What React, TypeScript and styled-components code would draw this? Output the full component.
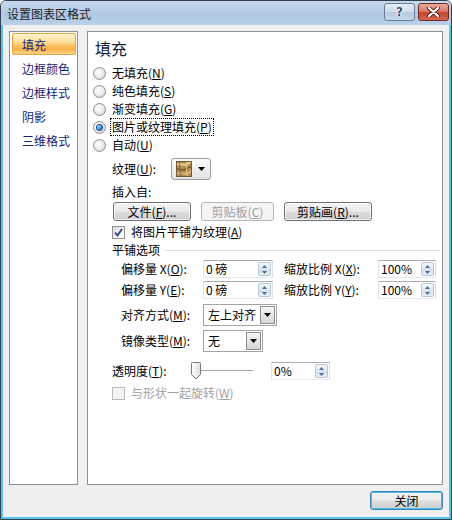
import React from 'react';
import styled, { createGlobalStyle, css } from 'styled-components';

const FONT = `"Noto Sans CJK SC", "Noto Sans", "Liberation Sans", sans-serif`;

const GlobalStyle = createGlobalStyle`
  html, body { margin: 0; padding: 0; background: #ffffff; }
  body { font-family: ${FONT}; font-size: 12px; color: #000; }
  * { box-sizing: border-box; }
`;

const Window = styled.div`
  width: 452px;
  height: 520px;
  border: 1px solid #34404e;
  border-radius: 6px 6px 0 0;
  display: flex;
  flex-direction: column;
  overflow: hidden;
  background: #b9d0e8;
`;

const TitleBar = styled.div`
  height: 24px;
  flex: none;
  display: flex;
  align-items: center;
  padding: 0 2px 0 6px;
  background: linear-gradient(#c6daee 0%, #b0c8e2 55%, #b9d0ea 100%);
`;

const Title = styled.div`
  flex: 1;
  font-size: 12px;
  line-height: 16px;
  color: #1c1c1c;
  padding-top: 2px;
`;

const CaptionButton = styled.div<{ $variant: 'help' | 'close' }>`
  width: 31px;
  height: 18px;
  margin-top: -3px;
  border-radius: 3px;
  display: flex;
  align-items: center;
  justify-content: center;
  ${(p) =>
    p.$variant === 'help'
      ? css`
          border: 1px solid #6b7e96;
          background: linear-gradient(#e6eef7 0%, #cddbeb 50%, #b6c9de 51%, #c8d8ea 100%);
          margin-right: 3px;
        `
      : css`
          border: 1px solid #6e2a22;
          background: linear-gradient(#e9a999 0%, #d87b6a 45%, #c2412c 55%, #d66a55 100%);
        `}
`;

const HelpGlyph = styled.span`
  font-family: "DejaVu Sans", sans-serif;
  font-weight: bold;
  font-size: 12px;
  line-height: 12px;
  color: #3d4d66;
  text-shadow: 0 0 1px #fff, 1px 0 0 #fff, -1px 0 0 #fff;
`;

const Body = styled.div`
  flex: 1;
  background: #f0f0f0;
  border: 2px solid #59c3ea;
  border-top: none;
  display: flex;
  flex-direction: column;
  padding: 6px 6px 0 6px;
`;

const Panels = styled.div`
  display: flex;
  gap: 9px;
  height: 454px;
  flex: none;
`;

const NavPanel = styled.div`
  width: 69px;
  border: 1px solid #8e8e99;
  background: #ffffff;
  padding: 0 1px 0 2px;
`;

const NavItem = styled.div<{ $active?: boolean }>`
  height: 22px;
  margin: 1px 0 2px;
  padding-left: 9px;
  display: flex;
  align-items: center;
  font-size: 12px;
  color: #14237a;
  border: 1px solid transparent;
  border-radius: 2px;
  ${(p) =>
    p.$active &&
    css`
      border-color: #e2a64a;
      background: linear-gradient(#fff3cf 0%, #fde2a2 35%, #fbc062 60%, #f9b349 75%, #fdd387 100%);
    `}
`;

const ContentPanel = styled.div`
  width: 356px;
  border: 1px solid #8e8e99;
  background: #ffffff;
  padding: 6px 0 0 5px;
  display: flex;
  flex-direction: column;
`;

const Heading = styled.div`
  font-size: 16px;
  line-height: 20px;
  height: 20px;
  margin-left: 2px;
  color: #14213d;
`;

const RadioGroup = styled.div`
  margin-top: 6px;
  display: flex;
  flex-direction: column;
`;

const RadioRow = styled.div`
  height: 18px;
  display: flex;
  align-items: center;
  gap: 6px;
`;

const RadioCircle = styled.span<{ $checked?: boolean }>`
  width: 13px;
  height: 13px;
  border-radius: 50%;
  border: 1px solid #8d8f91;
  background: radial-gradient(circle at 40% 40%, #ffffff 0%, #eeeeee 45%, #cfd0d1 100%);
  display: flex;
  align-items: center;
  justify-content: center;
  flex: none;
  &::after {
    content: '';
    display: ${(p) => (p.$checked ? 'block' : 'none')};
    width: 5px;
    height: 5px;
    border-radius: 50%;
    background: radial-gradient(circle at 35% 35%, #8fdcff 0%, #2a86d0 55%, #0d3f7e 100%);
    box-shadow: 0 0 0 1px #1b4f8f;
  }
`;

const Text = styled.span<{ $focus?: boolean; $disabled?: boolean }>`
  font-size: 12px;
  line-height: 16px;
  white-space: nowrap;
  color: ${(p) => (p.$disabled ? '#a2a2a2' : '#000')};
  ${(p) =>
    p.$focus &&
    css`
      outline: 1px dotted #000;
      outline-offset: 0;
      padding: 0 1px;
      margin-left: -1px;
    `}
`;

const Key = styled.span`
  text-decoration: underline;
`;

const Indent = styled.div`
  margin-left: 19px;
  display: flex;
  flex-direction: column;
`;

const Row = styled.div<{ $h: number; $mt: number; $ml?: number }>`
  display: flex;
  align-items: center;
  height: ${(p) => p.$h}px;
  margin-top: ${(p) => p.$mt}px;
  margin-left: ${(p) => p.$ml ?? 0}px;
`;

const Label = styled.span<{ $w: number }>`
  width: ${(p) => p.$w}px;
  flex: none;
  font-size: 12px;
  line-height: 16px;
  white-space: nowrap;
`;

const TextureDrop = styled.div`
  width: 40px;
  height: 22px;
  border: 1px solid #9aa0a6;
  border-radius: 3px;
  background: linear-gradient(#fbfbfb 0%, #efefef 50%, #e2e2e2 100%);
  display: flex;
  align-items: center;
  padding-left: 4px;
  gap: 6px;
`;

const Button = styled.div<{ $w: number; $disabled?: boolean }>`
  width: ${(p) => p.$w}px;
  height: 19px;
  flex: none;
  border: 1px solid ${(p) => (p.$disabled ? '#b4b8bb' : '#707070')};
  border-radius: 3px;
  background: ${(p) =>
    p.$disabled
      ? '#f4f4f4'
      : 'linear-gradient(#f4f4f4 0%, #ebebeb 48%, #dddddd 52%, #cfcfcf 100%)'};
  color: ${(p) => (p.$disabled ? '#a0a0a0' : '#000')};
  font-size: 12px;
  line-height: 17px;
  text-align: center;
  white-space: nowrap;
  box-shadow: ${(p) => (p.$disabled ? 'none' : 'inset 0 0 0 1px rgba(255,255,255,0.7)')};
`;

const ButtonRow = styled.div`
  display: flex;
  gap: 10px;
  margin-top: 2px;
  margin-left: 1px;
  height: 19px;
`;

const CheckBox = styled.span<{ $disabled?: boolean }>`
  width: 13px;
  height: 13px;
  flex: none;
  border: 1px solid ${(p) => (p.$disabled ? '#bcbcbc' : '#8e8f8f')};
  background: ${(p) =>
    p.$disabled ? '#f4f4f4' : 'linear-gradient(135deg, #dcdcdc 0%, #f4f4f4 60%, #ffffff 100%)'};
  display: flex;
  align-items: center;
  justify-content: center;
  margin-right: 6px;
`;

const Rule = styled.div`
  flex: 1;
  height: 1px;
  background: #d5dfe5;
  margin: 1px 2px 0 5px;
`;

const SpinBox = styled.div<{ $w: number }>`
  width: ${(p) => p.$w}px;
  height: 18px;
  flex: none;
  border: 1px solid #abadb3;
  border-left-color: #e2e3ea;
  border-right-color: #dbdfe6;
  border-bottom-color: #e3e9ef;
  background: #fff;
  display: flex;
  align-items: center;
  padding-left: 2px;
`;

const SpinValue = styled.span`
  flex: 1;
  font-size: 12px;
  line-height: 16px;
  white-space: pre;
`;

const Spinner = styled.div`
  width: 13px;
  height: 14px;
  margin-right: 1px;
  display: flex;
  flex-direction: column;
  border: 1px solid #b9c6d6;
  border-radius: 2px;
  background: linear-gradient(#f3f7fc 0%, #e2eaf4 50%, #d2deec 51%, #e6eef7 100%);
`;

const SpinHalf = styled.div`
  flex: 1;
  display: flex;
  align-items: center;
  justify-content: center;
`;

const Select = styled.div<{ $w: number }>`
  width: ${(p) => p.$w}px;
  height: 22px;
  flex: none;
  border: 1px solid #a3a3a3;
  background: #fff;
  display: flex;
  align-items: center;
  padding-left: 4px;
`;

const SelectText = styled.span`
  flex: 1;
  font-size: 12px;
  line-height: 16px;
  white-space: nowrap;
`;

const SelectArrow = styled.div`
  width: 15px;
  height: 18px;
  margin-right: 1px;
  border: 1px solid #8d8d8d;
  background: linear-gradient(#f6f6f6 0%, #e6e6e6 50%, #d6d6d6 100%);
  display: flex;
  align-items: center;
  justify-content: center;
`;

const SliderGap = styled.div`
  width: 18px;
  flex: none;
`;

const Footer = styled.div`
  display: flex;
  justify-content: flex-end;
  margin-top: 6px;
`;

const DefaultButton = styled.div`
  width: 73px;
  height: 19px;
  border: 1px solid #3c7fb1;
  border-radius: 3px;
  background: linear-gradient(#eaf6fd 0%, #d9f0fc 48%, #bee6fd 52%, #a7d9f5 100%);
  box-shadow: inset 0 0 0 1px #8ed3f7;
  font-size: 12px;
  line-height: 17px;
  text-align: center;
  background: linear-gradient(#f4f4f4 0%, #ebebeb 48%, #dddddd 52%, #cfcfcf 100%);
  box-shadow: inset 0 0 0 1px #48c3f0;
`;

const Arrow = () => (
  <svg width="7" height="4" viewBox="0 0 7 4">
    <path d="M0 0 H7 L3.5 4 Z" fill="#000" />
  </svg>
);

const SpinArrow = ({ up }: { up?: boolean }) => (
  <svg width="5" height="3" viewBox="0 0 5 3">
    <path d={up ? 'M0 3 H5 L2.5 0 Z' : 'M0 0 H5 L2.5 3 Z'} fill="#4d6b98" />
  </svg>
);

const Spin = ({ w, value }: { w: number; value: string }) => (
  <SpinBox $w={w}>
    <SpinValue>{value}</SpinValue>
    <Spinner>
      <SpinHalf>
        <SpinArrow up />
      </SpinHalf>
      <SpinHalf>
        <SpinArrow />
      </SpinHalf>
    </Spinner>
  </SpinBox>
);

const TextureIcon = () => (
  <svg width="16" height="16" viewBox="0 0 16 16">
    <rect x="0" y="0" width="16" height="16" fill="#b48d55" />
    <path d="M0 4 C4 1 7 6 11 3 S16 2 16 2" stroke="#e6cf95" strokeWidth="2" fill="none" />
    <path d="M0 9 C3 6 6 11 10 8 S15 6 16 7" stroke="#7a5528" strokeWidth="1.5" fill="none" />
    <path d="M0 13 C4 10 8 15 12 12 S16 11 16 11" stroke="#d9bd80" strokeWidth="1.6" fill="none" />
    <path d="M3 0 C5 5 2 9 6 16" stroke="#8f6532" strokeWidth="1" fill="none" />
    <path d="M10 0 C12 5 9 10 12 16" stroke="#e2c98c" strokeWidth="1" fill="none" />
    <rect x="0.5" y="0.5" width="15" height="15" fill="none" stroke="#6f5a3a" />
  </svg>
);

const CheckMark = () => (
  <svg width="9" height="9" viewBox="0 0 9 9">
    <path d="M1 4.5 L3.5 7.5 L8 1" stroke="#23418a" strokeWidth="1.8" fill="none" />
  </svg>
);

const Slider = () => (
  <svg width="63" height="18" viewBox="0 0 63 18" style={{ flex: 'none' }}>
    <line x1="10" y1="8.5" x2="63" y2="8.5" stroke="#a3a3a3" />
    <line x1="10" y1="9.5" x2="63" y2="9.5" stroke="#ffffff" />
    <defs>
      <linearGradient id="thumb" x1="0" x2="1" y1="0" y2="0">
        <stop offset="0" stopColor="#ffffff" />
        <stop offset="1" stopColor="#dedede" />
      </linearGradient>
    </defs>
    <path d="M1.5 1.5 Q1.5 0.5 2.5 0.5 H9.5 Q10.5 0.5 10.5 1.5 V12.5 L6 17 L1.5 12.5 Z" fill="url(#thumb)" stroke="#7b7b7b" />
  </svg>
);

const CloseGlyph = () => (
  <svg width="13" height="10" viewBox="0 0 13 10">
    <path d="M2 1 L11 9 M11 1 L2 9" stroke="#5a1d16" strokeWidth="4" strokeLinecap="round" />
    <path d="M2 1 L11 9 M11 1 L2 9" stroke="#ffffff" strokeWidth="2.2" strokeLinecap="round" />
  </svg>
);

const navItems = ['填充', '边框颜色', '边框样式', '阴影', '三维格式'];

const radios: { label: string; key: string; checked?: boolean }[] = [
  { label: '无填充', key: 'N' },
  { label: '纯色填充', key: 'S' },
  { label: '渐变填充', key: 'G' },
  { label: '图片或纹理填充', key: 'P', checked: true },
  { label: '自动', key: 'U' },
];

export default function App() {
  return (
    <>
      <GlobalStyle />
      <Window>
        <TitleBar>
          <Title>设置图表区格式</Title>
          <CaptionButton $variant="help">
            <HelpGlyph>?</HelpGlyph>
          </CaptionButton>
          <CaptionButton $variant="close">
            <CloseGlyph />
          </CaptionButton>
        </TitleBar>
        <Body>
          <Panels>
            <NavPanel>
              {navItems.map((n, i) => (
                <NavItem key={n} $active={i === 0}>
                  {n}
                </NavItem>
              ))}
            </NavPanel>
            <ContentPanel>
              <Heading>填充</Heading>
              <RadioGroup>
                {radios.map((r) => (
                  <RadioRow key={r.key}>
                    <RadioCircle $checked={r.checked} />
                    <Text $focus={r.checked}>
                      {r.label}(<Key>{r.key}</Key>)
                    </Text>
                  </RadioRow>
                ))}
              </RadioGroup>
              <Indent>
                <Row $h={22} $mt={4}>
                  <Label $w={59}>
                    纹理(<Key>U</Key>):
                  </Label>
                  <TextureDrop>
                    <TextureIcon />
                    <Arrow />
                  </TextureDrop>
                </Row>
                <Row $h={16} $mt={4}>
                  <Text>插入自:</Text>
                </Row>
                <ButtonRow>
                  <Button $w={78}>
                    文件(<Key>F</Key>)...
                  </Button>
                  <Button $w={73} $disabled>
                    剪贴板(<Key>C</Key>)
                  </Button>
                  <Button $w={88}>
                    剪贴画(<Key>R</Key>)...
                  </Button>
                </ButtonRow>
                <Row $h={16} $mt={3}>
                  <CheckBox>
                    <CheckMark />
                  </CheckBox>
                  <Text>
                    将图片平铺为纹理(<Key>A</Key>)
                  </Text>
                </Row>
                <Row $h={16} $mt={2}>
                  <Text>平铺选项</Text>
                  <Rule />
                </Row>
                <Row $h={18} $mt={2} $ml={9}>
                  <Label $w={82}>
                    偏移量 X(<Key>O</Key>):
                  </Label>
                  <Spin w={70} value="0 磅" />
                  <Label $w={94} style={{ marginLeft: 11 }}>
                    缩放比例 X(<Key>X</Key>):
                  </Label>
                  <Spin w={58} value="100%" />
                </Row>
                <Row $h={18} $mt={3} $ml={9}>
                  <Label $w={82}>
                    偏移量 Y(<Key>E</Key>):
                  </Label>
                  <Spin w={70} value="0 磅" />
                  <Label $w={94} style={{ marginLeft: 11 }}>
                    缩放比例 Y(<Key>Y</Key>):
                  </Label>
                  <Spin w={58} value="100%" />
                </Row>
                <Row $h={22} $mt={5} $ml={9}>
                  <Label $w={82}>
                    对齐方式(<Key>M</Key>):
                  </Label>
                  <Select $w={74}>
                    <SelectText>左上对齐</SelectText>
                    <SelectArrow>
                      <Arrow />
                    </SelectArrow>
                  </Select>
                </Row>
                <Row $h={22} $mt={4} $ml={9}>
                  <Label $w={82}>
                    镜像类型(<Key>M</Key>):
                  </Label>
                  <Select $w={60}>
                    <SelectText>无</SelectText>
                    <SelectArrow>
                      <Arrow />
                    </SelectArrow>
                  </Select>
                </Row>
                <Row $h={18} $mt={10}>
                  <Label $w={78}>
                    透明度(<Key>T</Key>):
                  </Label>
                  <Slider />
                  <SliderGap />
                  <Spin w={59} value="0%" />
                </Row>
                <Row $h={16} $mt={5}>
                  <CheckBox $disabled />
                  <Text $disabled>
                    与形状一起旋转(<Key>W</Key>)
                  </Text>
                </Row>
              </Indent>
            </ContentPanel>
          </Panels>
          <Footer>
            <DefaultButton>关闭</DefaultButton>
          </Footer>
        </Body>
      </Window>
    </>
  );
}
